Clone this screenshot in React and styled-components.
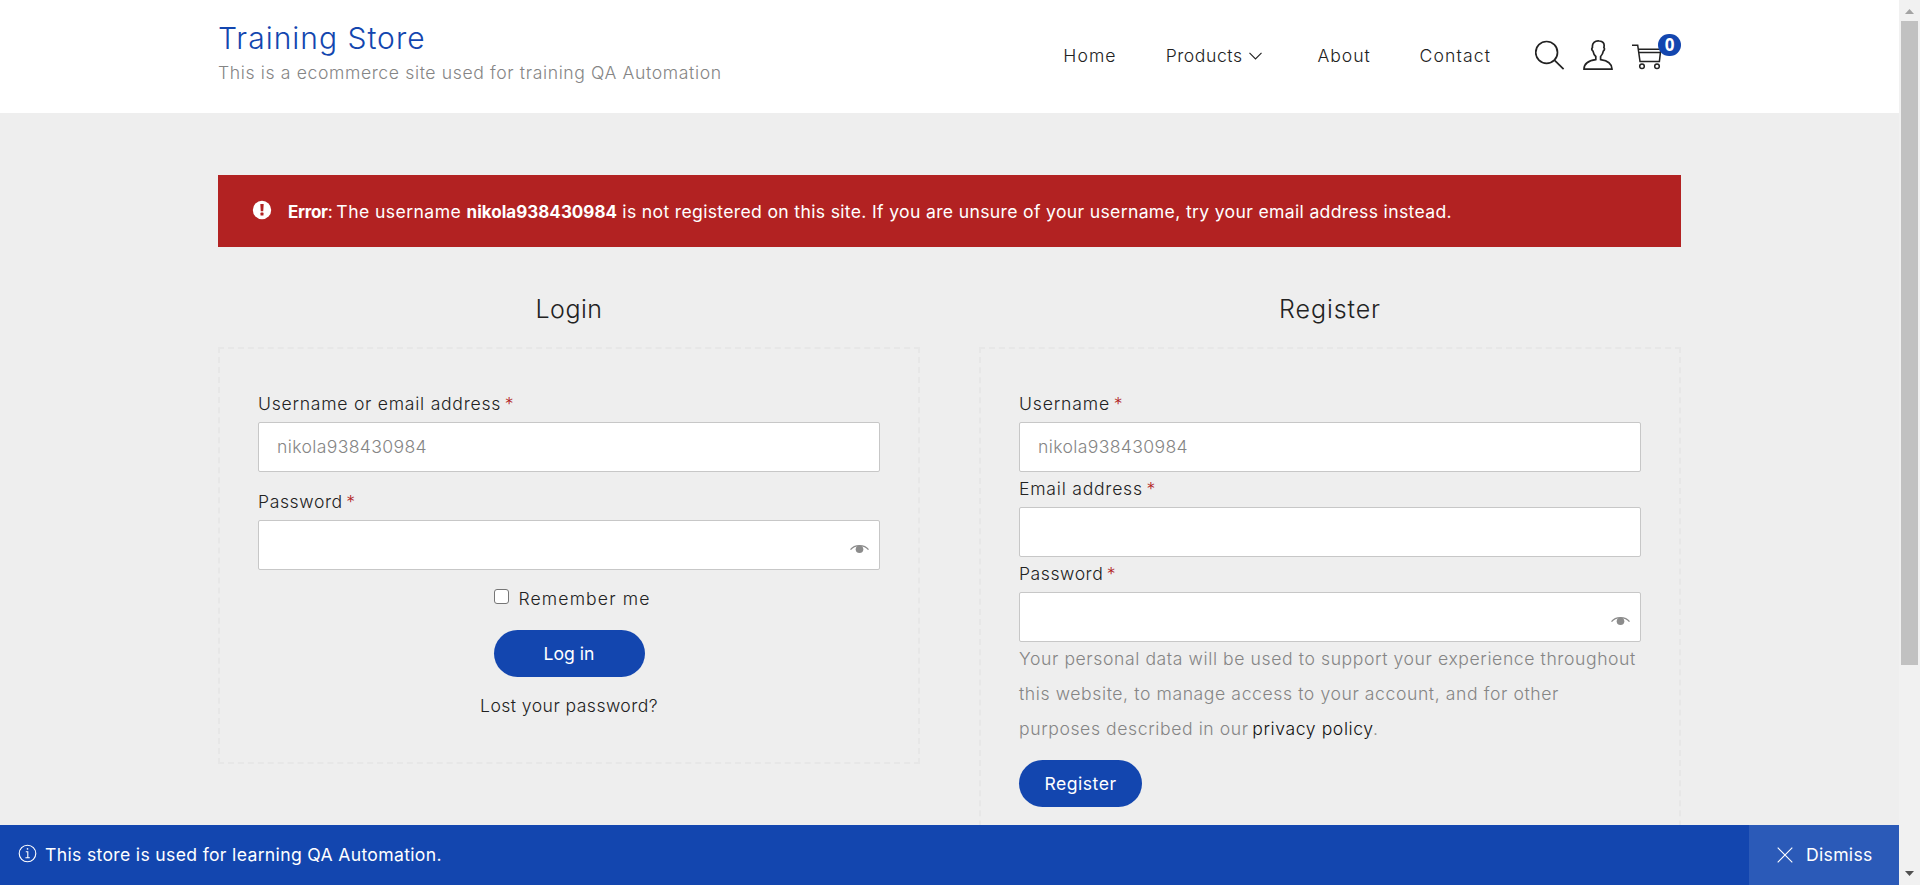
import React from "react";
import styled, { createGlobalStyle } from "styled-components";

const blue = "#1346af";
const ink = "#222";
const muted = "#858585";

const GlobalStyle = createGlobalStyle`
  * { box-sizing: border-box; }
  body { margin: 0; }
`;

const Screen = styled.div`
  display: flex;
  width: 1920px;
  height: 885px;
  overflow: hidden;
  background: #eee;
  color: ${ink};
  font: 300 17.6px/30px Inter, "Open Sans", sans-serif;
  white-space: nowrap;
`;

const Page = styled.div`
  position: relative;
  width: 1899px;
  height: 885px;
  overflow: hidden;
`;

const Text = styled.span`
  letter-spacing: ${({ $ls = 0.6 }) => $ls}px;
`;

/* ---------- header ---------- */

const Header = styled.header`
  display: flex;
  justify-content: space-between;
  height: 113px;
  padding: 0 218px;
  background: #fff;
`;

const Brand = styled.div`
  padding-top: 20px;
`;

const SiteTitle = styled.div`
  color: ${blue};
  font-size: 30px;
  line-height: 37px;
  letter-spacing: 1px;
`;

const Tagline = styled.div`
  margin-top: 1px;
  color: ${muted};
  letter-spacing: 0.62px;
`;

const Nav = styled.nav`
  display: flex;
  gap: 49px;
  padding-top: 41px;
`;

const NavItem = styled.a`
  display: flex;
  align-items: center;
  gap: 6px;
  height: 30px;
  color: ${ink};
`;

const HeaderEnd = styled.div`
  display: flex;
`;

const Tools = styled.div`
  display: flex;
  gap: 18px;
  margin-left: 44px;
  padding-top: 40px;
`;

const CartLink = styled.div`
  position: relative;
  width: 49px;
  margin-left: 1px;
`;

const CartCount = styled.span`
  position: absolute;
  top: -6px;
  right: 0;
  width: 23px;
  height: 22px;
  border-radius: 11px;
  background: ${blue};
  color: #fff;
  font: 700 17px/22px "Open Sans", sans-serif;
  text-align: center;
`;

/* ---------- content ---------- */

const Content = styled.main`
  padding: 62px 218px 0;
`;

const Alert = styled.div`
  display: flex;
  align-items: flex-start;
  height: 72px;
  padding: 22px 34px 0;
  background: #b22222;
  color: #fff;
  font-weight: 400;
  white-space: pre;
`;

const AlertIcon = styled.svg`
  margin: 3px 16px 0 0;
`;

const Strong = styled.strong`
  font-size: 17px;
  font-weight: 700;
  letter-spacing: ${({ $ls }) => $ls}px;
`;

const Columns = styled.div`
  display: flex;
  align-items: flex-start;
  justify-content: space-between;
  margin-top: 42px;
`;

const Column = styled.section`
  width: 702px;
`;

const Heading = styled.h2`
  margin: 0 0 18px;
  font-size: 25px;
  font-weight: 300;
  line-height: 40px;
  text-align: center;
  letter-spacing: ${({ $ls }) => $ls}px;
`;

const FormBox = styled.form`
  height: ${({ $h }) => $h}px;
  padding: 40px 38px 0;
  border: 2px dashed #e7e7e7;
`;

const Field = styled.div`
  margin-bottom: ${({ $mb = 2 }) => $mb}px;
`;

const Label = styled.label`
  display: block;
  letter-spacing: ${({ $ls }) => $ls}px;
`;

const Required = styled.span`
  margin-left: -2px;
  color: #b22222;
  letter-spacing: 0;
`;

const InputBox = styled.div`
  display: flex;
  align-items: center;
  justify-content: space-between;
  height: 50px;
  margin-top: 3px;
  padding: 0 10px 0 18px;
  border: 1px solid #c7c7c7;
  border-radius: 2px;
  background: #fff;
  color: ${muted};
  letter-spacing: 0.36px;
`;

const EyeIcon = styled.svg`
  margin: 7px 0 0 auto;
`;

const Centered = styled.div`
  display: flex;
  flex-direction: column;
  align-items: center;
`;

const RememberRow = styled.label`
  display: flex;
  gap: 10px;
  width: 151px;
`;

const Checkbox = styled.input`
  appearance: none;
  flex: none;
  width: 15px;
  height: 15px;
  margin: 5px 0 0;
  border: 1px solid #767676;
  border-radius: 3px;
  background: #fff;
`;

const Button = styled.button`
  width: ${({ $w }) => $w}px;
  height: 47px;
  margin: ${({ $mt }) => $mt}px 0 0;
  padding: 0 0 1px;
  border: 0;
  border-radius: 24px;
  background: ${blue};
  color: #fff;
  font: 400 17.6px/45px Inter, sans-serif;
  letter-spacing: ${({ $ls }) => $ls}px;
`;

const LostLink = styled.a`
  margin-top: 14px;
  letter-spacing: 0.44px;
`;

const Policy = styled.p`
  margin: -1px 0 0;
  color: ${muted};
  line-height: 35px;
  letter-spacing: 0.59px;
`;

const PolicyLink = styled.a`
  margin-left: -2px;
  color: #111;
`;

/* ---------- notice bar and scrollbar ---------- */

const Notice = styled.div`
  position: absolute;
  left: 0;
  right: 0;
  bottom: 0;
  display: flex;
  align-items: center;
  height: 60px;
  padding-left: 18px;
  background: ${blue};
  color: #fff;
  font-weight: 400;
`;

const InfoIcon = styled.svg`
  margin: 0 8px 3px 0;
`;

const Dismiss = styled.a`
  display: flex;
  align-items: center;
  gap: 13px;
  width: 150px;
  height: 60px;
  margin-left: auto;
  padding-left: 28px;
  background: #2b5ab8;
`;

const Scrollbar = styled.div`
  display: flex;
  flex-direction: column;
  align-items: center;
  justify-content: space-between;
  width: 21px;
  height: 885px;
  padding: 9px 0;
  background: #f1f1f1;
`;

const Thumb = styled.div`
  width: 17px;
  height: 644px;
  margin: 7px 0 auto;
  background: #c1c1c1;
`;

const Eye = () => (
  <EyeIcon width="19" height="10" viewBox="0 0 19 10">
    <path d="M0.5 5.6C4.5 0.2 14.5 0.2 18.5 5.6" fill="none" stroke="#8c8c8c" strokeWidth="1.3" />
    <circle cx="9.5" cy="5.2" r="3.8" fill="#8c8c8c" />
  </EyeIcon>
);

const FormField = ({ label, ls, value, eye, mb }) => (
  <Field $mb={mb}>
    <Label $ls={ls}>
      {label} <Required>*</Required>
    </Label>
    <InputBox>
      {value}
      {eye && <Eye />}
    </InputBox>
  </Field>
);

export default function App() {
  return (
    <Screen>
      <GlobalStyle />
      <Page>
        <Header>
          <Brand>
            <SiteTitle>Training Store</SiteTitle>
            <Tagline>This is a ecommerce site used for training QA Automation</Tagline>
          </Brand>
          <HeaderEnd>
            <Nav>
              <NavItem><Text $ls={1.1}>Home</Text></NavItem>
              <NavItem>
                <Text $ls={0.56}>Products</Text>
                <svg width="20" height="8" viewBox="0 0 20 8" fill="none" stroke={ink} strokeWidth="1.1">
                  <path d="M0.5 0.8L6.5 7L12.5 0.8" />
                </svg>
              </NavItem>
              <NavItem><Text $ls={0.9}>About</Text></NavItem>
              <NavItem><Text $ls={1.1}>Contact</Text></NavItem>
            </Nav>
            <Tools>
              <svg width="30" height="30" viewBox="0 0 30 30" fill="none" stroke={ink} strokeWidth="1.7">
                <circle cx="11.6" cy="12.4" r="10.9" />
                <path d="M19.4 20.2L28.6 29.2" />
              </svg>
              <svg width="30" height="30" viewBox="0 0 30 30" fill="none" stroke={ink} strokeWidth="1.7">
                <path d="M1 29.1H29C29 23.5 24.5 20.6 17.6 19.6V16.5C19.4 14.8 20 13 20.3 11.2C21.6 9.9 21.6 8.4 20.9 7.5C22 2.9 19.5 1.2 16.3 1C12 0.5 8.8 3.2 9.5 7.3C8.5 8.6 8.9 10.3 10 11.2C10.4 13.4 11.3 15.2 12.8 16.5V19.6C5.8 20.5 1 23.5 1 29.1Z" />
              </svg>
              <CartLink>
                <svg width="31" height="30" viewBox="0 0 31 30" fill="none" stroke={ink} strokeWidth="1.5">
                  <path d="M0 5.2H5.7L8 21.4H27.4L28.8 9.2H6.3M6.7 12.4H28.5" />
                  <circle cx="10" cy="26.2" r="2.3" />
                  <circle cx="25" cy="26.2" r="2.3" />
                </svg>
                <CartCount>0</CartCount>
              </CartLink>
            </Tools>
          </HeaderEnd>
        </Header>

        <Content>
          <Alert>
            <AlertIcon width="20" height="20" viewBox="0 0 20 20">
              <circle cx="10" cy="10" r="9.2" fill="#fff" />
              <path d="M8.3 4H11.7L11.2 11.2H8.8Z" fill="#b22222" />
              <rect x="8.5" y="12.6" width="3" height="3" rx="0.6" fill="#b22222" />
            </AlertIcon>
            <span>
              <Strong $ls={-0.3}>Error</Strong>
              <Text $ls={-0.7}>: </Text>
              <Text $ls={0.42}>The username </Text>
              <Strong $ls={0.02}>nikola938430984</Strong>
              <Text $ls={0.33}> is not registered on this site. If you are unsure of your username, try your email address instead.</Text>
            </span>
          </Alert>

          <Columns>
            <Column>
              <Heading $ls={0.48}>Login</Heading>
              <FormBox $h={417}>
                <FormField label="Username or email address" ls={0.74} value="nikola938430984" mb={15} />
                <FormField label="Password" ls={0.6} eye mb={14} />
                <Centered>
                  <RememberRow>
                    <Checkbox type="checkbox" />
                    <Text $ls={1.12}>Remember me</Text>
                  </RememberRow>
                  <Button type="button" $w={151} $mt={16} $ls={0}>Log in</Button>
                  <LostLink>Lost your password?</LostLink>
                </Centered>
              </FormBox>
            </Column>

            <Column>
              <Heading $ls={0.92}>Register</Heading>
              <FormBox $h={560}>
                <FormField label="Username" ls={0.84} value="nikola938430984" />
                <FormField label="Email address" ls={0.76} />
                <FormField label="Password" ls={0.55} eye mb={0} />
                <Policy>
                  Your personal data will be used to support your experience throughout
                  <br />
                  this website, to manage access to your account, and for other
                  <br />
                  purposes described in our <PolicyLink>privacy policy</PolicyLink>.
                </Policy>
                <Button type="button" $w={123} $mt={14} $ls={0.5}>Register</Button>
              </FormBox>
            </Column>
          </Columns>
        </Content>

        <Notice>
          <InfoIcon width="19" height="19" viewBox="0 0 19 19" fill="none" stroke="#fff" strokeWidth="1.1">
            <circle cx="9.5" cy="9.5" r="8.3" />
            <path d="M7.8 7.8H9.8V13.6M7.4 13.8H11.8" />
            <path d="M8.8 4.9H10.2" strokeWidth="1.5" />
          </InfoIcon>
          <Text $ls={0.33}>This store is used for learning QA Automation.</Text>
          <Dismiss>
            <svg width="16" height="16" viewBox="0 0 16 16" stroke="#fff" strokeWidth="1.1">
              <path d="M0.7 0.7L15.3 15.3M15.3 0.7L0.7 15.3" />
            </svg>
            <Text $ls={0.3}>Dismiss</Text>
          </Dismiss>
        </Notice>
      </Page>

      <Scrollbar>
        <svg width="9" height="5" viewBox="0 0 9 5"><path d="M0 5L4.5 0L9 5Z" fill="#a3a3a3" /></svg>
        <Thumb />
        <svg width="9" height="5" viewBox="0 0 9 5"><path d="M0 0L4.5 5L9 0Z" fill="#505050" /></svg>
      </Scrollbar>
    </Screen>
  );
}
